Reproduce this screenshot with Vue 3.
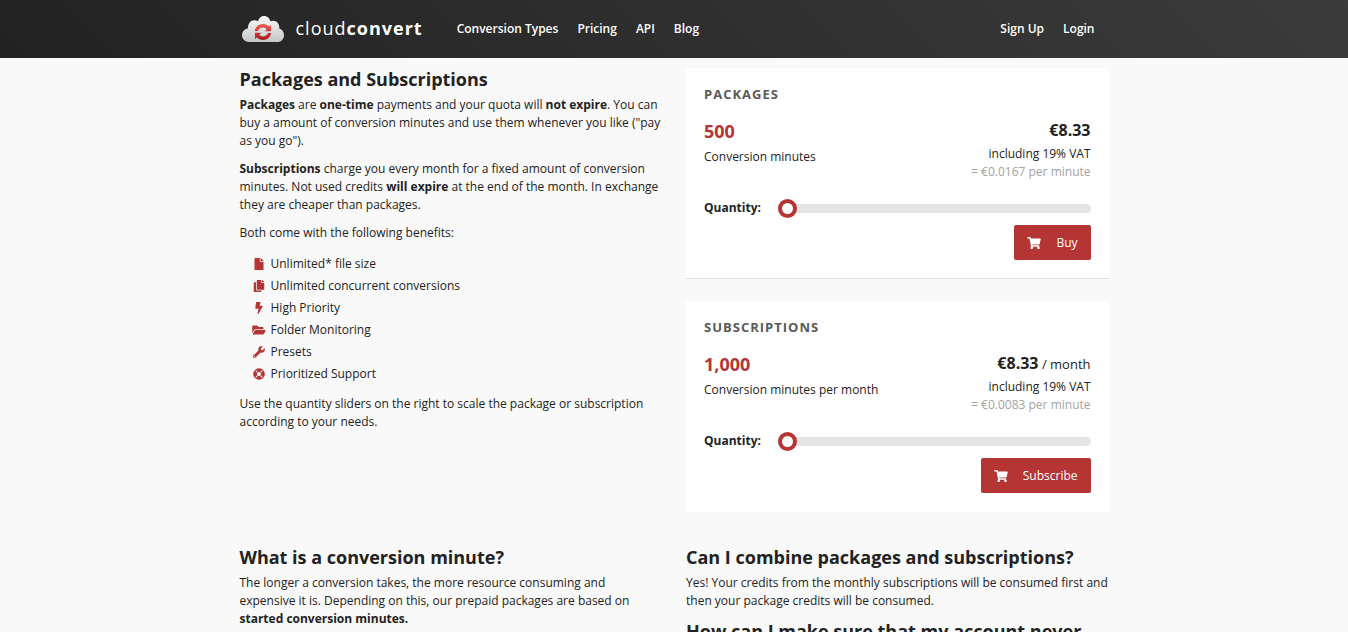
<script setup>
import { ref } from 'vue'

const nav = ['Conversion Types', 'Pricing', 'API', 'Blog']
const account = ['Sign Up', 'Login']

const benefits = [
  { text: 'Unlimited* file size', box: '0 0 384 512', d: 'M224 136V0H24C10.7 0 0 10.7 0 24v464c0 13.3 10.7 24 24 24h336c13.3 0 24-10.7 24-24V160H248c-13.2 0-24-10.8-24-24zm160-14.1v6.1H256V0h6.1c6.4 0 12.5 2.5 17 7l97.9 98c4.5 4.5 7 10.6 7 16.9z' },
  { text: 'Unlimited concurrent conversions', box: '0 0 448 512', d: 'M320 448v40c0 13.255-10.745 24-24 24H24c-13.255 0-24-10.745-24-24V120c0-13.255 10.745-24 24-24h72v296c0 30.879 25.121 56 56 56h168zm0-344V0H152c-13.255 0-24 10.745-24 24v368c0 13.255 10.745 24 24 24h272c13.255 0 24-10.745 24-24V128H344c-13.2 0-24-10.8-24-24zm120.971-31.029L375.029 7.029A24 24 0 0 0 358.059 0H352v96h96v-6.059a24 24 0 0 0-7.029-16.97z' },
  { text: 'High Priority', box: '0 0 320 512', d: 'M296 160H180.6l42.6-129.8C227.2 15 215.7 0 200 0H56C44 0 33.8 8.9 32.2 20.8l-32 240C-1.7 275.2 9.5 288 24 288h118.7L96.6 482.5c-3.6 15.2 8 29.5 23.3 29.5 8.4 0 16.4-4.4 20.8-12l176-304c9.3-15.9-2.2-36-20.7-36z' },
  { text: 'Folder Monitoring', box: '0 0 576 512', d: 'M572.694 292.093L500.27 416.248A63.997 63.997 0 0 1 444.989 448H45.025c-18.523 0-30.064-20.093-20.731-36.093l72.424-124.155A64 64 0 0 1 152 256h399.964c18.523 0 30.064 20.093 20.73 36.093zM152 224h328v-48c0-26.51-21.49-48-48-48H272l-64-64H48C21.49 64 0 85.49 0 112v278.046l69.077-118.418C86.214 242.25 117.989 224 152 224z' },
  { text: 'Presets', box: '0 0 512 512', d: 'M507.73 109.1c-2.24-9.03-13.54-12.09-20.12-5.51l-74.36 74.36-67.88-11.31-11.31-67.88 74.36-74.36c6.62-6.62 3.43-17.9-5.66-20.16-47.38-11.74-99.55.91-136.58 37.93-39.64 39.64-50.55 97.1-34.05 147.2L18.74 402.76c-24.99 24.99-24.99 65.51 0 90.5 24.99 24.99 65.51 24.99 90.5 0l213.21-213.21c50.12 16.71 107.47 5.68 147.37-34.22 37.07-37.07 49.7-89.32 37.91-136.73zM64 472c-13.25 0-24-10.75-24-24 0-13.26 10.75-24 24-24s24 10.74 24 24c0 13.25-10.75 24-24 24z' },
  { text: 'Prioritized Support', ring: true, box: '0 0 512 512' },
]

const plans = ref([
  { id: 'packages', title: 'Packages', amount: '500', unit: 'Conversion minutes', price: '€8.33', period: '', rate: '= €0.0167 per minute', action: 'Buy', quantity: 0 },
  { id: 'subscriptions', title: 'Subscriptions', amount: '1,000', unit: 'Conversion minutes per month', price: '€8.33', period: '/ month', rate: '= €0.0083 per minute', action: 'Subscribe', quantity: 0 },
])
</script>

<template>
  <div class="page">
    <header class="topbar">
      <div class="container bar">
        <a href="#" class="brand">
          <svg class="cloud" viewBox="0 0 42 26" aria-hidden="true">
            <defs>
              <linearGradient id="cloud-fill" x1="0" y1="0" x2="0" y2="1">
                <stop offset="0" stop-color="#fafafa" />
                <stop offset="1" stop-color="#c6c6c6" />
              </linearGradient>
              <linearGradient id="arrow-fill" x1="0" y1="8" x2="0" y2="24" gradientUnits="userSpaceOnUse">
                <stop offset="0" stop-color="#ee5a55" />
                <stop offset="1" stop-color="#a51c1e" />
              </linearGradient>
            </defs>
            <path fill="url(#cloud-fill)" d="M7 26C3 26 0 23 0 19.300c0-3.600 2.500-6.100 5.800-6.700C6 7.500 8.500 4.200 12.300 4.200c1.400 0 2.600.4 3.600 1.100C16.900 2 19.200 0 22 0c3.300 0 5.700 2.200 6.400 5.300 1-.5 2.100-.7 3.200-.6 3.800.3 6 3.500 5.700 7.800C40.200 13.400 42 16 42 19.200 42 23.100 39.200 26 35.300 26z" />
            <g fill="url(#arrow-fill)">
              <path d="M12.800 15C13.500 10.800 16.800 8 21 8c2.500 0 4.700.9 6.200 2.500L29 9.100v6.100h-6.300l2.100-2c-1-1.100-2.300-1.600-3.800-1.600-2.300 0-4.300 1.100-5 3.400z" />
              <path d="M29.200 17C28.500 21.200 25.200 24 21 24c-2.500 0-4.700-.9-6.200-2.500L13 22.900v-6.100h6.300l-2.100 2c1 1.100 2.300 1.600 3.800 1.600 2.300 0 4.300-1.100 5-3.400z" />
            </g>
          </svg>
          <span class="name">cloud<b>convert</b></span>
        </a>
        <nav class="links">
          <a v-for="item in nav" :key="item" href="#">{{ item }}</a>
        </nav>
        <nav class="links account">
          <a v-for="item in account" :key="item" href="#">{{ item }}</a>
        </nav>
      </div>
    </header>

    <main class="container">
      <div class="columns intro">
        <section class="about">
          <h2>Packages and Subscriptions</h2>
          <p><b>Packages</b> are <b>one-time</b> payments and your quota will <b>not expire</b>. You can buy a amount of conversion minutes and use them whenever you like ("pay as you go").</p>
          <p><b>Subscriptions</b> charge you every month for a fixed amount of conversion minutes. Not used credits <b>will expire</b> at the end of the month. In exchange they are cheaper than packages.</p>
          <p>Both come with the following benefits:</p>
          <ul class="benefits">
            <li v-for="b in benefits" :key="b.text">
              <svg :viewBox="b.box" aria-hidden="true">
                <g v-if="b.ring" fill="none">
                  <circle cx="256" cy="256" r="168" stroke="currentColor" stroke-width="160" />
                  <path d="M118 118l60 60M394 118l-60 60M118 394l60-60M394 394l-60-60" stroke="#f9f9f9" stroke-width="48" />
                </g>
                <path v-else fill="currentColor" :d="b.d" />
              </svg>
              <span>{{ b.text }}</span>
            </li>
          </ul>
          <p>Use the quantity sliders on the right to scale the package or subscription according to your needs.</p>
        </section>

        <div class="plans">
          <section v-for="plan in plans" :key="plan.id" class="card">
            <h3>{{ plan.title }}</h3>
            <div class="details">
              <div>
                <div class="amount">{{ plan.amount }}</div>
                <div>{{ plan.unit }}</div>
              </div>
              <div class="cost">
                <div class="price"><b>{{ plan.price }}</b> <span v-if="plan.period">{{ plan.period }}</span></div>
                <div>including 19% VAT</div>
                <div class="rate">{{ plan.rate }}</div>
              </div>
            </div>
            <div class="quantity">
              <label :for="plan.id">Quantity:</label>
              <input :id="plan.id" v-model="plan.quantity" type="range" min="0" max="100" />
            </div>
            <button type="button" class="action">
              <svg viewBox="0 0 576 512" aria-hidden="true">
                <path fill="currentColor" d="M528.12 301.319l47.273-208C578.806 78.301 567.391 64 551.99 64H159.208l-9.166-44.81C147.758 8.021 137.93 0 126.529 0H24C10.745 0 0 10.745 0 24v16c0 13.255 10.745 24 24 24h69.883l70.248 343.435C147.325 417.1 136 435.222 136 456c0 30.928 25.072 56 56 56s56-25.072 56-56c0-15.674-6.447-29.835-16.824-40h209.647C430.447 426.165 424 440.326 424 456c0 30.928 25.072 56 56 56s56-25.072 56-56c0-22.172-12.888-41.332-31.579-50.405l5.517-24.276c3.413-15.018-8.002-29.319-23.403-29.319H218.117l-6.545-32h293.145c11.206 0 20.92-7.754 23.403-18.681z" />
              </svg>
              <span>{{ plan.action }}</span>
            </button>
          </section>
        </div>
      </div>

      <div class="columns faq">
        <section>
          <h2>What is a conversion minute?</h2>
          <p>The longer a conversion takes, the more resource consuming and expensive it is. Depending on this, our prepaid packages are based on <b>started conversion minutes.</b></p>
        </section>
        <section>
          <h2>Can I combine packages and subscriptions?</h2>
          <p>Yes! Your credits from the monthly subscriptions will be consumed first and then your package credits will be consumed.</p>
          <h2>How can I make sure that my account never</h2>
        </section>
      </div>
    </main>
  </div>
</template>

<style>
body {
  background: #f9f9f9;
}
</style>

<style scoped>
.page {
  font-family: "Open Sans", sans-serif;
  font-size: 12px;
  line-height: 18px;
  color: #222;
}
.container {
  box-sizing: border-box;
  max-width: 869px;
  margin: 0 auto;
}
a {
  color: #fff;
  text-decoration: none;
}
.topbar {
  background: linear-gradient(45deg, #222, #3b3b3b);
}
.bar {
  display: flex;
  align-items: center;
  height: 58px;
  padding: 0 14px 0 2px;
}
.brand {
  display: flex;
  align-items: center;
  gap: 12px;
  margin-right: 34px;
}
.cloud {
  width: 42px;
  height: 26px;
}
.name {
  padding-bottom: 2px;
  font-size: 18px;
  line-height: 24px;
  letter-spacing: 1px;
}
.links {
  display: flex;
  gap: 19px;
  font-weight: 600;
}
.account {
  margin-left: auto;
}
.columns {
  display: grid;
  grid-template-columns: 1fr 1fr;
  gap: 24px;
}
.intro {
  padding-top: 10px;
}
.faq {
  padding-top: 34px;
}
h2 {
  margin: 0 0 6px;
  font-size: 18px;
  line-height: 22px;
  font-weight: 700;
}
p {
  margin: 0 0 10px;
}
.benefits {
  display: grid;
  gap: 4px;
  list-style: none;
  margin: 13px 0 12px;
  padding: 0 0 0 12px;
}
.benefits li {
  display: flex;
  align-items: center;
  gap: 5px;
}
.benefits svg {
  width: 14px;
  height: 12px;
  color: #b53535;
}
.plans {
  display: grid;
  align-content: start;
  gap: 22px;
}
.card {
  display: flex;
  flex-direction: column;
  padding: 18px;
  background: #fff;
  border-bottom: 1px solid #dcdcdc;
}
.card:last-child {
  border-bottom-color: #fff;
}
h3 {
  margin: 0;
  font-size: 13px;
  line-height: 16px;
  font-weight: 700;
  letter-spacing: 1px;
  text-transform: uppercase;
  color: #595959;
}
.details {
  display: flex;
  justify-content: space-between;
  margin-top: 16px;
}
.amount {
  margin-bottom: 4px;
  font-size: 18px;
  line-height: 26px;
  font-weight: 700;
  color: #b53535;
}
.cost {
  text-align: right;
}
.price {
  margin-bottom: 2px;
  font-size: 13px;
  line-height: 24px;
}
.price b {
  font-size: 16px;
}
.rate {
  color: #a3a3a3;
}
.quantity {
  display: flex;
  align-items: center;
  gap: 17px;
  margin: 18px 0 8px;
}
.quantity label {
  font-weight: 700;
}
.quantity input {
  flex: 1;
  min-width: 0;
  height: 18px;
  margin: 0;
  appearance: none;
  background: transparent;
}
.quantity input::-webkit-slider-runnable-track {
  height: 9px;
  border-radius: 5px;
  background: #e4e4e4;
}
.quantity input::-webkit-slider-thumb {
  appearance: none;
  box-sizing: border-box;
  width: 19px;
  height: 19px;
  margin-top: -5px;
  border: 4px solid #b53535;
  border-radius: 50%;
  background: #fff;
}
.action {
  display: flex;
  align-items: center;
  gap: 15px;
  align-self: flex-end;
  height: 35px;
  padding: 0 13px;
  border: 0;
  border-radius: 2px;
  background: #b53535;
  color: #fff;
  font: inherit;
}
.action svg {
  width: 14px;
  height: 12px;
}
</style>
